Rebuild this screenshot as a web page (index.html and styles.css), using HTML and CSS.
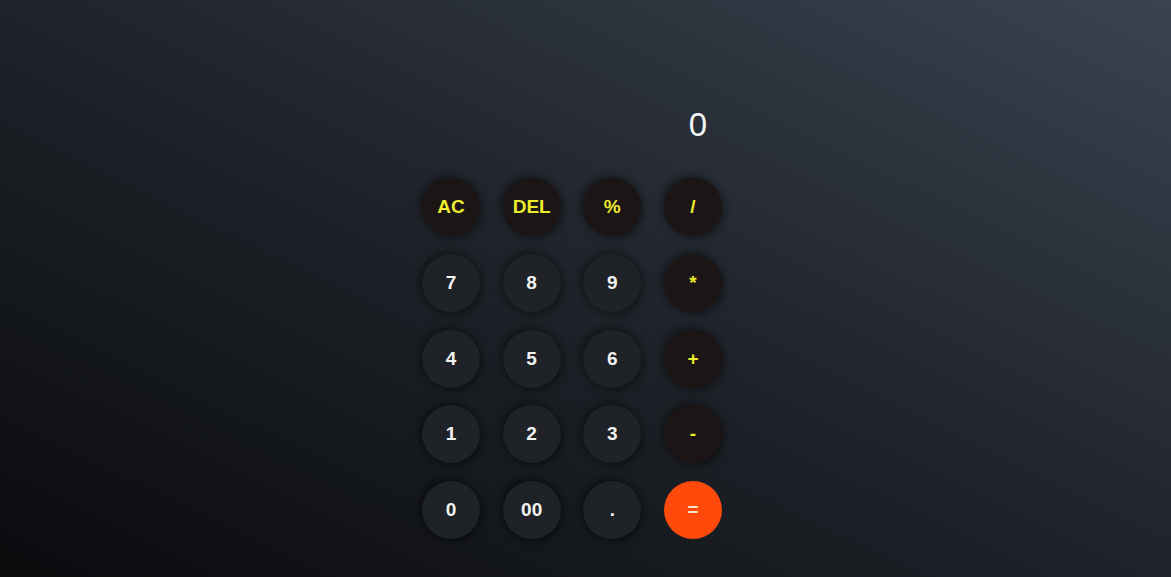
FILE: index.html
```html
<!DOCTYPE html>
<html>
<head>
<meta charset="utf-8">
<link rel="stylesheet" href="styles.css">
</head>
<body>
<div class="page">
  <div class="calc">
    <div class="display">0</div>
    <div class="keys">
      <button class="key op">AC</button>
      <button class="key op">DEL</button>
      <button class="key op">%</button>
      <button class="key op">/</button>
      <button class="key">7</button>
      <button class="key">8</button>
      <button class="key">9</button>
      <button class="key op">*</button>
      <button class="key">4</button>
      <button class="key">5</button>
      <button class="key">6</button>
      <button class="key op">+</button>
      <button class="key">1</button>
      <button class="key">2</button>
      <button class="key">3</button>
      <button class="key op">-</button>
      <button class="key">0</button>
      <button class="key">00</button>
      <button class="key">.</button>
      <button class="key eq">=</button>
    </div>
  </div>
</div>
</body>
</html>
```
FILE: styles.css
```css
html, body {
  margin: 0;
  padding: 0;
  height: 100%;
}
body {
  background: linear-gradient(to top right, #0a0b0d 0%, #1f232a 50%, #3a4350 100%);
  font-family: "Liberation Sans", Arial, sans-serif;
  overflow: hidden;
}
.page {
  height: 577px;
  display: flex;
  justify-content: center;
  align-items: flex-start;
}
.calc {
  width: 300px;
  margin-right: 27px;
  padding-top: 103px;
  display: flex;
  flex-direction: column;
}
.display {
  text-align: right;
  color: #f4f6f8;
  font-size: 33px;
  line-height: 44px;
  height: 44px;
  padding-right: 15px;
  margin-bottom: 31px;
}
.keys {
  display: grid;
  grid-template-columns: repeat(4, 58px);
  column-gap: 22.67px;
  row-gap: 17.75px;
}
.key {
  width: 58px;
  height: 58px;
  border-radius: 50%;
  border: none;
  padding: 0;
  background: #1f2226;
  color: #f2f2f2;
  font-family: "Liberation Sans", Arial, sans-serif;
  font-weight: bold;
  font-size: 19px;
  box-shadow: -3px -3px 7px rgba(0, 0, 0, 0.35), 3px 3px 7px rgba(0, 0, 0, 0.35);
  display: flex;
  align-items: center;
  justify-content: center;
}
.key.op {
  background: #1b1615;
  color: #ecec2c;
}
.key.eq {
  background: #ff4a0c;
  color: #fde4cc;
  box-shadow: none;
}
```
